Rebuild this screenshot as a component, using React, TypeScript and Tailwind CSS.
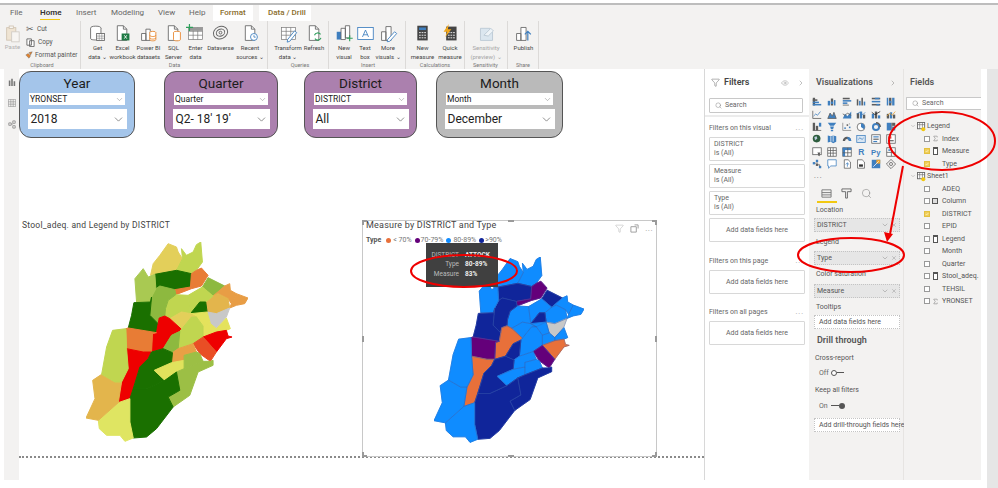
import React from "react"
import { ChevronDown, ChevronRight, Eye, Filter, Search, Sigma, X } from "lucide-react"

const BLUE = "#3f7fbf"
const GREY = "#5c5c5c"
const YEL = "#f2c811"

// district outlines, same shapes on both maps, [points, left colour, right colour]
const LB = "#0f8cff"
const NV = "#10259a"
const PU = "#64007a"
const OR = "#e8703a"
const DG = "#1a7000"
const districts: [string, string, string][] = [
  ["452,200 460,165 480,140 505,105 530,115 535,130 548,150 530,185 465,197", "#e3cf5a", LB],
  ["530,185 548,150 545,120 560,140 580,130 590,108 603,100 608,160 590,185 575,195", "#c0d650", LB],
  ["465,197 530,185 575,195 572,235 525,243 480,232 468,240", DG, NV],
  ["575,195 590,185 605,178 625,200 605,232 575,240 528,258 525,243 572,235", "#e87c35", PU],
  ["625,207 675,232 640,262 608,235", "#8db93f", NV],
  ["655,255 640,262 675,232 690,225 692,245 710,255 695,285 685,270", "#e89d45", LB],
  ["710,255 745,268 735,285 710,290 690,298 695,285", "#e89d45", LB],
  ["618,280 640,262 655,255 685,270 690,298 650,315 622,310", "#e3b54c", LB],
  ["565,260 608,235 640,262 618,280 600,280 572,315", "#c0d650", LB],
  ["572,315 600,280 618,280 622,310 590,325", DG, NV],
  ["497,300 505,275 528,258 565,260 572,315 545,310 510,330 495,322", "#c0d650", LB],
  ["455,265 468,240 480,232 525,243 528,258 505,275 497,300 495,322 478,328 475,345 450,320", "#8db93f", NV],
  ["405,210 430,180 445,205 465,197 468,240 455,265 452,280 410,280", "#a9c952", LB],
  ["402,282 452,280 455,265 450,320 475,345 470,372 385,358 395,320", DG, NV],
  ["622,310 650,315 690,298 680,325 650,360 632,345", "#c8c8c8", "#c8c8c8"],
  ["590,325 572,315 622,310 632,345 610,352", "#e4e25c", LB],
  ["650,360 680,328 692,360 680,365 650,370", "#e4e25c", LB],
  ["610,352 632,345 650,360 650,370 610,385", "#e4e25c", LB],
  ["510,330 545,310 572,315 590,325 575,325 545,362", "#e3cf5a", LB],
  ["458,375 470,372 475,345 478,328 495,322 510,330 545,362 540,368 515,380 490,420 455,430", "#ee0000", OR],
  ["378,360 385,358 470,372 458,375 455,430 430,430 380,420", "#e87c35", PU],
  ["380,420 430,430 455,430 445,450 420,475 400,540 390,570 355,582 365,520 385,480", "#ee0000", OR],
  ["535,420 540,368 545,362 575,325 590,325 610,352 610,385 580,405", "#c0d650", LB],
  ["610,385 650,370 680,365 685,382 697,385 680,390 650,430", "#ee0000", OR],
  ["580,405 610,385 650,430 632,458 600,435", "#e94e25", PU],
  ["490,420 515,380 540,368 535,420 518,432", "#8db93f", NV],
  ["515,462 518,432 535,420 580,405 590,430 553,440 553,455", "#e8a045", LB],
  ["445,450 455,430 490,420 518,432 515,462 463,485 495,515 440,540 400,540 420,475", DG, NV],
  ["463,485 515,462 553,455 553,480 530,490 495,515", "#e0e25c", LB],
  ["553,440 590,430 600,435 610,458 553,480 553,455", "#9cbf45", LB],
  ["505,565 540,545 530,490 553,480 610,458 632,458 640,455 640,470 595,490 570,560 520,595", "#9cbf45", NV],
  ["390,570 400,540 440,540 495,515 530,490 540,545 505,565 520,595 470,660 440,685 400,688 390,640", DG, NV],
  ["295,635 355,582 390,570 390,640 400,688 375,698 360,680 320,680 298,660", "#dfe562", LB],
  ["258,628 285,570 278,515 305,497 345,520 365,520 355,582 295,635", "#e3b54c", LB],
  ["305,497 320,415 338,365 378,360 380,420 385,480 365,520 345,520", "#c0d650", LB],
]

const PunjabMap = ({ right, className }: { right?: boolean; className: string }) => (
  <svg viewBox="258 100 487 600" preserveAspectRatio="none" className={className}>
    {districts.map((d) => (
      <polygon key={d[0]} points={d[0]} fill={right ? d[2] : d[1]} stroke={right ? d[2] : d[1]} strokeWidth={3} strokeLinejoin="round" />
    ))}
    {right &&
      districts.map((d) => <polygon key={d[0]} points={d[0]} fill="none" stroke="#3b5fae" strokeWidth={1} strokeLinejoin="round" />)}
  </svg>
)

const Doc = ({ children }: { children?: React.ReactNode }) => (
  <>
    <path d="M5 2h7l4 4v13H5z" fill="#fff" stroke="#666" />
    <path d="M12 2v4h4" fill="none" stroke="#666" />
    {children}
  </>
)

const Table = ({ x = 0 }: { x?: number }) => (
  <g transform={`translate(${x} 0)`} fill="none" stroke="#777" strokeWidth=".8">
    <rect x="3" y="4" width="16" height="14" fill="#fff" />
    <path d="M3 8.5h16M3 13h16M8.3 4v14M13.6 4v14" />
  </g>
)

const ribbonIcons: Record<string, React.ReactNode> = {
  get: (
    <>
      <ellipse cx="9" cy="5" rx="6" ry="2.5" fill="#fff" stroke="#666" />
      <path d="M3 5v12c0 2 12 2 12 0V5" fill="#fff" stroke="#666" />
      <rect x="10" y="11" width="9" height="8" fill="#fff" stroke="#666" />
      <path d="M10 14h9M10 16.5h9M13 11v8M16 11v8" stroke="#777" strokeWidth=".6" />
    </>
  ),
  excel: (
    <Doc>
      <rect x="10" y="11" width="9" height="8" fill="#1e7a45" />
      <path d="M13 13l3 4M16 13l-3 4" stroke="#fff" />
    </Doc>
  ),
  pbi: (
    <>
      <path d="M3 11h5v8H3zM8 6h5v13H8z" fill="#fff" stroke="#666" />
      <ellipse cx="16" cy="10" rx="3.5" ry="1.5" fill="#fff" stroke="#e8862e" />
      <path d="M12.5 10v8c0 2 7 2 7 0v-8M12.5 13c0 2 7 2 7 0M12.5 16c0 2 7 2 7 0" fill="#fff" stroke="#e8862e" />
    </>
  ),
  sql: (
    <Doc>
      <ellipse cx="15" cy="10" rx="4" ry="1.6" fill="#fff" stroke="#e8862e" />
      <path d="M11 10v8c0 2 8 2 8 0v-8" fill="#fff" stroke="#e8862e" />
    </Doc>
  ),
  enter: (
    <>
      <Table />
      <rect x="3" y="4" width="16" height="4" fill="#999" />
      <path d="M4 0v8M0 4h8" stroke="#2e9e5b" strokeWidth="1.4" />
    </>
  ),
  dataverse: (
    <g fill="none" stroke="#666" strokeWidth="1.1">
      <ellipse cx="11" cy="10" rx="8.5" ry="7" transform="rotate(-25 11 10)" />
      <ellipse cx="11" cy="10" rx="5" ry="4" transform="rotate(-25 11 10)" />
      <circle cx="11" cy="10" r="1.6" />
    </g>
  ),
  recent: (
    <Doc>
      <circle cx="15" cy="15" r="4" fill="#fff" stroke={BLUE} />
      <path d="M15 13v2.2h2" fill="none" stroke={BLUE} />
    </Doc>
  ),
  transform: (
    <>
      <Table />
      <path d="M10 18l8-10 2.5 2-8 10-3 1z" fill="#fff" stroke={BLUE} />
    </>
  ),
  refresh: (
    <Doc>
      <path d="M11 13a4 4 0 0 1 7-1M18.5 16a4 4 0 0 1-7 1" fill="none" stroke="#2e9e5b" strokeWidth="1.3" />
    </Doc>
  ),
  visual: (
    <>
      <rect x="2" y="9" width="5" height="9" fill={BLUE} />
      <path d="M7 5h5v13H7zM12 2h5v14h-5z" fill="#fff" stroke="#666" />
      <path d="M17 13v7M13.5 16.500h7" stroke="#2e9e5b" strokeWidth="1.3" />
    </>
  ),
  text: (
    <>
      <rect x="2" y="4" width="18" height="14" fill="#fff" stroke={BLUE} />
      <path d="M7.500 15l3.500-8 3.500 8M8.800 12.500h4.400" fill="none" stroke={BLUE} />
    </>
  ),
  more: (
    <>
      <path d="M3 9h5v10H3zM8 3h6v16H8z" fill="#fff" stroke="#666" />
      <path d="M10 18l8-9 2.500 2-8 9-3 .5z" fill="#fff" stroke={BLUE} />
    </>
  ),
  measure: (
    <>
      <rect x="5" y="2" width="12" height="17" fill="#444" />
      <rect x="7" y="4" width="8" height="3" fill={BLUE} />
      <path d="M7 10h2M10 10h2M13 10h2M7 13h2M10 13h2M13 13h2M7 16h2M10 16h2M13 16h2" stroke="#fff" />
    </>
  ),
  quick: (
    <>
      <rect x="6" y="3" width="12" height="16" fill="#444" />
      <path d="M8 10h2M11 10h2M14 10h2M8 13h2M11 13h2M14 13h2M8 16h2M11 16h2M14 16h2" stroke="#fff" />
      <path d="M9 0L3 9h4l-2 6 7-9H8z" fill="#f2a71b" />
    </>
  ),
  sensitivity: (
    <>
      <path d="M4 5h11l3 3v11H4z" fill="#dbe6ef" stroke="#b9c7d3" />
      <path d="M8 13l8-8 3 3-6 6z" fill="#eef3f7" stroke="#b9c7d3" />
    </>
  ),
  publish: (
    <>
      <path d="M3 11h5v8H3zM8 4h6v15H8z" fill="#fff" stroke="#666" />
      <path d="M16 19V9M12.500 12l3.500-3.500 3.500 3.500" fill="none" stroke={BLUE} strokeWidth="1.4" />
    </>
  ),
}

type RibbonBtn = { icon: string; lines: string[]; w: string; faded?: boolean }

const ribbonGroups: { label: string; cls: string; buttons: RibbonBtn[] }[] = [
  {
    label: "Data",
    cls: "w-[187px] pl-[4px]",
    buttons: [
      { icon: "get", lines: ["Get", "data ⌄"], w: "w-[25px]" },
      { icon: "excel", lines: ["Excel", "workbook"], w: "w-[25px]" },
      { icon: "pbi", lines: ["Power BI", "datasets"], w: "w-[27px]" },
      { icon: "sql", lines: ["SQL", "Server"], w: "w-[23px]" },
      { icon: "enter", lines: ["Enter", "data"], w: "w-[21px]" },
      { icon: "dataverse", lines: ["Dataverse"], w: "w-[29px]" },
      { icon: "recent", lines: ["Recent", "sources ⌄"], w: "w-[30px]" },
    ],
  },
  {
    label: "Queries",
    cls: "w-[61px] pl-[7px]",
    buttons: [
      { icon: "transform", lines: ["Transform", "data ⌄"], w: "w-[26px]" },
      { icon: "refresh", lines: ["Refresh"], w: "w-[26px]" },
    ],
  },
  {
    label: "Insert",
    cls: "w-[77px] pl-[5px]",
    buttons: [
      { icon: "visual", lines: ["New", "visual"], w: "w-[20px]" },
      { icon: "text", lines: ["Text", "box"], w: "w-[22px]" },
      { icon: "more", lines: ["More", "visuals ⌄"], w: "w-[24px]" },
    ],
  },
  {
    label: "Calculations",
    cls: "w-[59px] pl-[3px]",
    buttons: [
      { icon: "measure", lines: ["New", "measure"], w: "w-[27px]" },
      { icon: "quick", lines: ["Quick", "measure"], w: "w-[28px]" },
    ],
  },
  {
    label: "Sensitivity",
    cls: "w-[43px] pl-[2px]",
    buttons: [{ icon: "sensitivity", lines: ["Sensitivity", "(preview) ⌄"], w: "w-[38px]", faded: true }],
  },
  {
    label: "Share",
    cls: "w-[31px] pl-[3px]",
    buttons: [{ icon: "publish", lines: ["Publish"], w: "w-[25px]" }],
  },
]

const RibbonGroup = ({ label, cls, buttons }: { label: string; cls: string; buttons: RibbonBtn[] }) => (
  <div className={`${cls} h-full flex flex-col border-r border-[#dcdad8]`}>
    <div className="flex flex-1">
      {buttons.map((b) => (
        <div key={b.icon} className={`${b.w} flex flex-col items-center pt-[3px] shrink-0 ${b.faded ? "text-[#a6a6a6]" : "text-[#444]"}`}>
          <svg viewBox="0 0 22 22" className="w-[19px] h-[19px] mb-[1px] shrink-0">
            {ribbonIcons[b.icon]}
          </svg>
          {b.lines.map((l) => (
            <span key={l} className="text-[6px] leading-[8.500px] whitespace-nowrap">
              {l}
            </span>
          ))}
        </div>
      ))}
    </div>
    <div className="text-[5.500px] leading-[8px] text-center text-[#777] -ml-[3px]">{label}</div>
  </div>
)

const Slicer = ({ title, field, value, cls }: { title: string; field: string; value: string; cls: string }) => (
  <div className={`${cls} h-[67px] rounded-[12px] border border-[#555] flex flex-col items-center px-[9px] pt-[3px] shrink-0`}>
    <div className="text-[13.500px] leading-[16px] text-[#1c1c1c]">{title}</div>
    <div className="w-full h-[12px] mt-[2px] bg-white flex items-center justify-between px-[1px] text-[8.500px] text-[#222]">
      <span>{field}</span>
      <ChevronDown className="w-[9px] h-[9px] text-[#777]" strokeWidth={1.2} />
    </div>
    <div className="w-[calc(100%+3px)] h-[20px] mt-[4px] bg-white flex items-center justify-between pl-[3px] pr-[2px] text-[12px] text-[#222]">
      <span>{value}</span>
      <ChevronDown className="w-[13px] h-[13px] text-[#555]" strokeWidth={1.2} />
    </div>
  </div>
)

const R = (x: number, y: number, w: number, h: number, c: string = BLUE) => <rect key={`${x}${y}${w}${h}`} x={x} y={y} width={w} height={h} fill={c} />

const lineIcon = (d: string, c: string = GREY) => <path d={d} fill="none" stroke={c} strokeWidth="1" />

const vizIcons: React.ReactNode[] = [
  <>{R(1, 1, 3, 10, GREY)}{R(1, 6, 8, 2)}{R(1, 9, 11, 2)}{R(1, 3, 6, 2, GREY)}</>,
  <>{R(1, 5, 3, 6)}{R(5, 2, 3, 9, GREY)}{R(9, 4, 2, 7)}{R(5, 6, 3, 3)}</>,
  <>{R(1, 1, 9, 2, GREY)}{R(1, 4, 11, 2)}{R(1, 7, 6, 2)}{R(1, 10, 8, 1, GREY)}</>,
  <>{R(1, 3, 2, 8, GREY)}{R(4, 5, 2, 6)}{R(7, 1, 2, 10, GREY)}{R(10, 6, 2, 5)}</>,
  <>{R(1, 1, 11, 2, GREY)}{R(5, 1, 6, 2)}{R(1, 5, 11, 2)}{R(1, 9, 11, 2, GREY)}{R(7, 9, 4, 2)}</>,
  <>{R(1, 1, 2, 10)}{R(4, 1, 3, 10, GREY)}{R(8, 1, 3, 10)}{R(4, 5, 3, 3)}</>,
  <>{lineIcon("M1 1v10h11")}{lineIcon("M2 8l3-3 2 2 4-5", BLUE)}</>,
  <><path d="M1 11l3-7 3 4 2-5 3 8z" fill={BLUE} />{lineIcon("M1 11l3-7 3 4 2-5 3 8z")}</>,
  <><path d="M1 11l3-6 3 3 5-6v9z" fill={BLUE} />{lineIcon("M1 5l3 2 3-3 5 3")}</>,
  <>{R(1, 4, 3, 7, GREY)}{R(5, 2, 3, 9)}{R(9, 6, 3, 5, GREY)}{lineIcon("M1 5l4-2 4 3 3-3", BLUE)}</>,
  <>{R(1, 5, 3, 6)}{R(5, 2, 3, 9, GREY)}{R(9, 7, 3, 4)}{lineIcon("M1 3l4 3 7-4", "#222")}</>,
  <>{R(1, 5, 3, 6, GREY)}{R(5, 3, 3, 8)}{R(9, 6, 3, 5, GREY)}{lineIcon("M1 8l4-4 3 3 4-5", "#e8a02e")}</>,
  <>{R(1, 1, 3, 10, GREY)}{R(5, 5, 3, 6, GREY)}{R(9, 1, 3, 5)}{lineIcon("M1 11h11")}</>,
  <><path d="M1 1h11l-3 4H4zM4 6h5l-1 3H5zM5 10h3v2H5z" fill={BLUE} /></>,
  <>{lineIcon("M1 1v10h11", "#888")}{R(3, 7, 2, 2)}{R(6, 3, 2, 2, GREY)}{R(9, 6, 2, 2)}{R(9, 2, 1, 1, GREY)}</>,
  <><circle cx="6.500" cy="6.500" r="5" fill="#fff" stroke={GREY} /><path d="M6.500 6.500V1.500a5 5 0 0 1 4 8z" fill={BLUE} /></>,
  <><circle cx="6.500" cy="6.500" r="4" fill="none" stroke={BLUE} strokeWidth="2.500" /><path d="M6.500 1a5.500 5.500 0 0 1 5.500 5.500" fill="none" stroke={GREY} strokeWidth="2" /></>,
  <>{R(1, 1, 6, 10)}{R(8, 1, 4, 4, GREY)}{R(8, 6, 4, 5, BLUE)}{lineIcon("M7.500 1v10")}</>,
  <><circle cx="6" cy="6" r="5" fill="#2e5d3e" /><path d="M3 4l3-1 1 3-3 2z" fill="#bcd" /></>,
  <><path d="M1 2l4 1 3-1 4 1v7l-4 2-3-2-4 1z" fill={BLUE} />{lineIcon("M5 3v7M8 2v8", "#fff")}</>,
  <><path d="M1 9a5.500 5.500 0 0 1 11 0h-3a2.500 2.500 0 0 0-5 0z" fill={GREY} /><path d="M7 4a5 5 0 0 1 5 5H9a2.500 2.500 0 0 0-2-2.500z" fill={BLUE} /></>,
  <><rect x="1" y="2" width="11" height="9" fill="#d8e6f3" stroke={BLUE} />{lineIcon("M3 7l2-2 3 2 2-2", BLUE)}</>,
  <><rect x="1" y="1" width="11" height="11" fill="#fff" stroke={GREY} />{R(3, 3, 7, 1.500)}{R(3, 6, 7, 1.500, GREY)}{R(3, 9, 5, 1.500)}</>,
  <><rect x="1" y="1" width="11" height="11" fill="#fff" stroke={GREY} />{R(3, 3, 4, 3, "#d9534f")}{R(3, 8, 7, 1.500, GREY)}</>,
  <><rect x="1" y="1" width="11" height="9" fill="#fff" stroke={GREY} /><path d="M7 7l4 0-1 2v3l-2-1V9z" fill={GREY} /></>,
  <><rect x="1" y="1" width="11" height="11" fill="#fff" stroke={GREY} />{lineIcon("M1 4.500h11M1 8h11M4.500 1v11M8 1v11", GREY)}</>,
  <><rect x="1" y="1" width="11" height="11" fill="#fff" stroke={GREY} />{R(1, 1, 11, 3)}{R(1, 1, 3, 11)}{lineIcon("M1 7.500h11M7.500 1v11", GREY)}</>,
  <text x="3" y="10.500" fontSize="11" fontWeight="700" fill={BLUE} fontFamily="Liberation Sans, sans-serif">R</text>,
  <text x="0" y="10" fontSize="10" fontWeight="700" fill={BLUE} fontFamily="Liberation Sans, sans-serif">Py</text>,
  <><rect x="1" y="1" width="11" height="11" fill="#fff" stroke={GREY} />{R(3, 3, 3, 2)}{lineIcon("M1 7h11M7 1v11", GREY)}</>,
  <>{R(1, 4, 3, 3)}{R(5, 1, 3, 3)}{R(5, 6, 3, 3, GREY)}{R(9, 9, 3, 3)}{lineIcon("M4 5.500h1M6.500 4v2M8 7.500h2v2", GREY)}</>,
  <><path d="M1 1h11v8H5l-3 3V9H1z" fill="#fff" stroke={BLUE} /></>,
  <><path d="M3 1h5l3 3v8H3z" fill="#fff" stroke={GREY} />{lineIcon("M5 7l2-2 2 2M7 5v5", BLUE)}</>,
  <><path d="M2 1h6l3 3v8H2z" fill="#fff" stroke={GREY} />{R(4, 7, 5, 3, "#333")}</>,
  <>{R(1, 1, 11, 11)}{R(7, 1, 5, 5, "#e8a02e")}{lineIcon("M3 10l7-7", "#fff")}</>,
  <g fill="none" stroke={GREY}><path d="M6.500 .5l6 6-6 6-6-6z" /><circle cx="6.500" cy="6.500" r="2" /></g>,
]

const Label = ({ children, cls = "" }: { children: React.ReactNode; cls?: string }) => <div className={`text-[7px] leading-[9px] text-[#555] ${cls}`}>{children}</div>

const Well = ({ label, cls, filled }: { label: string; cls: string; filled?: boolean }) => (
  <div className={`${cls} h-[14px] border border-dotted border-[#c4c4c4] ml-[5px] w-[86px] flex items-center justify-between px-[2px] text-[7px] ${filled ? "bg-[#e6e6e6]" : "bg-white pl-[4px]"} text-[#555]`}>
    <span className="whitespace-nowrap">{label}</span>
    {filled && (
      <span className="flex items-center gap-[2px] text-[#777]">
        <ChevronDown className="w-[8px] h-[8px]" strokeWidth={1.2} />
        <X className="w-[6px] h-[6px]" strokeWidth={1.4} />
      </span>
    )}
  </div>
)

const FilterCard = ({ title, cls, h = "h-[24px]" }: { title?: string; cls: string; h?: string }) => (
  <div className={`${cls} ${h} border border-[#d8d8d8] rounded-[1px] bg-white text-[7px] leading-[9px] text-[#666] ${title ? "pl-[4px] pt-[2px]" : "flex items-center justify-center"}`}>
    {title ? (
      <>
        <div>{title}</div>
        <div>is (All)</div>
      </>
    ) : (
      "Add data fields here"
    )}
  </div>
)

const FilterSection = ({ title, cls }: { title: string; cls: string }) => (
  <div className={`${cls} flex items-center justify-between pr-[5px] text-[7px] leading-[9px] text-[#666]`}>
    <span>{title}</span>
    <span className="text-[#999] tracking-[1px]">...</span>
  </div>
)

const TableIcon = () => (
  <svg viewBox="0 0 10 10" className="w-[9px] h-[9px] shrink-0 overflow-visible">
    <rect x=".5" y=".5" width="8" height="7" fill="#fff" stroke="#666" />
    <path d="M.5 3h8M3 .5v7M6 .5v7" stroke="#666" strokeWidth=".7" />
    <circle cx="7" cy="8" r="2.200" fill={YEL} />
  </svg>
)

const fields: { name: string; icon?: "sigma" | "calc" | "col"; checked?: boolean }[] = [
  { name: "ADEQ" },
  { name: "Column", icon: "col" },
  { name: "DISTRICT", checked: true },
  { name: "EPID" },
  { name: "Legend", icon: "calc" },
  { name: "Month" },
  { name: "Quarter" },
  { name: "Stool_adeq.", icon: "calc" },
  { name: "TEHSIL" },
  { name: "YRONSET", icon: "sigma" },
]

const FieldRow = ({ name, icon, checked }: { name: string; icon?: "sigma" | "calc" | "col"; checked?: boolean }) => (
  <div className="h-[12.500px] flex items-center pl-[20px] text-[7px] text-[#555]">
    <span className={`w-[6px] h-[6px] border shrink-0 flex items-center justify-center ${checked ? "bg-[#f0ce5a] border-[#e3c040]" : "bg-white border-[#999]"}`}>
      {checked && (
        <svg viewBox="0 0 6 6" className="w-[4px] h-[4px]">
          <path d="M1 3l1.500 1.500L5 1.500" fill="none" stroke="#fff6cf" />
        </svg>
      )}
    </span>
    <span className="w-[10px] flex justify-center shrink-0">
      {icon === "sigma" && <Sigma className="w-[7px] h-[7px]" strokeWidth={1.4} />}
      {icon === "calc" && <span className="w-[5px] h-[8px] border border-[#555] border-t-2 bg-white" />}
      {icon === "col" && <span className="w-[6px] h-[6px] border border-[#555] bg-[#ddd]" />}
    </span>
    <span className="ml-[2px] whitespace-nowrap">{name}</span>
  </div>
)

const TableRow = ({ name }: { name: string }) => (
  <div className="h-[12.500px] flex items-center pl-[6px] text-[7px] text-[#555]">
    <ChevronDown className="w-[6px] h-[6px] mr-[1px] text-[#777]" strokeWidth={1.3} />
    <TableIcon />
    <span className="ml-[1px]">{name}</span>
  </div>
)

const handleCls = "absolute bg-[#9a9a9a]"

export default function App() {
  return (
    <div className="relative w-[998px] h-[488px] overflow-hidden bg-white font-['Roboto',sans-serif]">
      <div className="h-[3px]" />
      <div className="h-[2px] bg-[#bdbdbd]" />
      {/* tabs */}
      <div className="h-[16px] bg-[#f3f2f1] flex items-stretch text-[8px] text-[#666] leading-[16px]">
        <span className="ml-[10px] w-[30px]">File</span>
        <span className="w-[36px] font-semibold text-[#333] relative">
          Home
          <span className="absolute left-0 top-[14px] w-[20px] h-[1px] bg-[#f2c811]" />
        </span>
        <span className="w-[35px]">Insert</span>
        <span className="w-[47px]">Modeling</span>
        <span className="w-[31px]">View</span>
        <span className="w-[24px]">Help</span>
        <span className="w-[40px] bg-white pl-[7px] font-medium text-[#8a6d2b]">Format</span>
        <span className="w-[6px]" />
        <span className="w-[52px] bg-white pl-[9px] font-medium text-[#8a6d2b]">Data / Drill</span>
      </div>
      {/* ribbon */}
      <div className="h-[48px] bg-[#f3f2f1] flex">
        <div className="w-[81px] h-full flex flex-col border-r border-[#dcdad8] pl-[4px] shrink-0">
          <div className="flex flex-1 pt-[3px]">
            <div className="w-[17px] flex flex-col items-center text-[#b0b0b0] text-[6px] leading-[8px]">
              <svg viewBox="0 0 18 22" className="w-[15px] h-[19px]">
                <rect x="2" y="4" width="11" height="15" fill="#efe4d3" stroke="#cfc2b0" />
                <rect x="8" y="9" width="9" height="12" fill="#f7f5f2" stroke="#cfcac4" />
                <rect x="5" y="2" width="5" height="3" fill="#f7f5f2" stroke="#cfc2b0" />
              </svg>
              Paste
            </div>
            <div className="flex flex-col gap-[3px] pl-[4px] text-[6.500px] leading-[10px] text-[#555] whitespace-nowrap">
              <div className="flex items-center gap-[3px] pl-[1px]">
                <span className="text-[9px] leading-[10px]">✂</span>Cut
              </div>
              <div className="flex items-center gap-[3px] pl-[1px]">
                <svg viewBox="0 0 10 10" className="w-[9px] h-[9px]">
                  <path d="M1 1h5v7H1zM4 3h5v6.500H4z" fill="#fff" stroke="#666" />
                </svg>
                Copy
              </div>
              <div className="flex items-center gap-[2px]">
                <svg viewBox="0 0 10 10" className="w-[8px] h-[8px]">
                  <path d="M1 5l3-2 3 3-2 3zM5 2l4-1-2 4z" fill="#e0832f" stroke="#666" strokeWidth=".5" />
                </svg>
                Format painter
              </div>
            </div>
          </div>
          <div className="text-[5.500px] leading-[8px] text-center text-[#777]">Clipboard</div>
        </div>
        {ribbonGroups.map((g) => (
          <RibbonGroup key={g.label} {...g} />
        ))}
      </div>
      {/* body */}
      <div className="h-[411px] flex">
        <div className="w-[19px] pl-[4px] shrink-0">
          <div className="h-full bg-[#f3f2f1] flex flex-col items-center gap-[13px] pt-[9px]">
            <svg viewBox="0 0 10 10" className="w-[8px] h-[8px]">
              <path d="M1 3h2v7H1zM4 1h2v9H4zM7 4h2v6H7z" fill="#777" />
            </svg>
            <svg viewBox="0 0 10 10" className="w-[8px] h-[8px]">
              <path d="M.5.5h9v9h-9zM.5 3.500h9M.5 6.500h9M3.500.5v9M6.500.5v9" fill="none" stroke="#888" strokeWidth=".7" />
            </svg>
            <svg viewBox="0 0 10 10" className="w-[8px] h-[9px]">
              <path d="M1 3h3v3H1zM6 .5h3v3H6zM6 6.500h3v3H6zM4 4.500h2" fill="none" stroke="#888" />
            </svg>
          </div>
        </div>
        {/* report canvas */}
        <div className="w-[685px] shrink-0 flex flex-col">
          <div className="h-[389px] border-b-2 border-dotted border-[#8a8a8a] pt-[2px] flex flex-col">
            <div className="flex items-start">
              <Slicer title="Year" field="YRONSET" value="2018" cls="w-[116px] bg-[#a4c5ea]" />
              <div className="w-[29px] shrink-0" />
              <Slicer title="Quarter" field="Quarter" value="Q2- 18' 19'" cls="w-[114px] bg-[#ab80ae]" />
              <div className="w-[26px] shrink-0" />
              <Slicer title="District" field="DISTRICT" value="All" cls="w-[113px] bg-[#ab80ae]" />
              <div className="w-[19px] shrink-0" />
              <Slicer title="Month" field="Month" value="December" cls="w-[127px] bg-[#bababa]" />
            </div>
            <div className="flex mt-[82px]">
              <div className="w-[343px] shrink-0">
                <div className="pl-[3px] text-[8.500px] leading-[11px] tracking-[.25px] text-[#444]">Stool_adeq. and Legend by DISTRICT</div>
                <PunjabMap className="w-[162px] h-[200px] ml-[67px] mt-[11px]" />
              </div>
              <div className="relative w-[295px] h-[237px] border border-[#c8c8c8] shrink-0">
                <div className="pl-[3px] text-[9px] leading-[12px] mt-[-2px] tracking-[.2px] text-[#444]">Measure by DISTRICT and Type</div>
                <div className="flex items-center pl-[3px] mt-[5px] h-[9px] text-[7px] text-[#777] whitespace-nowrap">
                  <span className="font-bold text-[#555] mr-[5px]">Type</span>
                  <span className="w-[5px] h-[5px] rounded-full bg-[#e8703a] mr-[2px]" />
                  <span className="mr-[3px]">&lt; 70%</span>
                  <span className="w-[5px] h-[5px] rounded-full bg-[#64007a] mr-[1px]" />
                  <span className="mr-[3px]">70-79%</span>
                  <span className="w-[5px] h-[5px] rounded-full bg-[#0f8cff] mr-[2px]" />
                  <span className="mr-[3px]">80-89%</span>
                  <span className="w-[5px] h-[5px] rounded-full bg-[#10259a] mr-[1px]" />
                  <span>&gt;90%</span>
                </div>
                <PunjabMap right className="w-[150px] h-[186px] ml-[71px] mt-[12px]" />
                {/* tooltip */}
                <div className="absolute left-[63px] top-[22px] w-[72px] h-[44px] bg-[#404040] grid grid-cols-[33px_1fr] gap-x-[6px] content-center text-[6.500px] leading-[9.500px]">
                  <span className="text-right text-[#bbb]">DISTRICT</span>
                  <span className="font-bold text-[#eee]">ATTOCK</span>
                  <span className="text-right text-[#bbb]">Type</span>
                  <span className="font-bold text-[#eee]">80-89%</span>
                  <span className="text-right text-[#bbb]">Measure</span>
                  <span className="font-bold text-[#eee]">83%</span>
                </div>
                {/* header icons */}
                <div className="absolute right-[3px] top-[3px] flex items-center gap-[6px] text-[#999]">
                  <Filter className="w-[9px] h-[9px]" strokeWidth={1} />
                  <svg viewBox="0 0 10 10" className="w-[9px] h-[9px]">
                    <path d="M1 3h6v6H1zM5 1h4v4" fill="none" stroke="#999" />
                  </svg>
                  <span className="text-[8px] leading-[8px] tracking-[.5px]">...</span>
                </div>
                {/* resize handles */}
                <span className={`${handleCls} -left-[1px] -top-[1px] w-[5px] h-[2px]`} />
                <span className={`${handleCls} -left-[1px] -top-[1px] w-[2px] h-[5px]`} />
                <span className={`${handleCls} -right-[1px] -top-[1px] w-[5px] h-[2px]`} />
                <span className={`${handleCls} -right-[1px] -top-[1px] w-[2px] h-[5px]`} />
                <span className={`${handleCls} -left-[1px] -bottom-[1px] w-[5px] h-[2px]`} />
                <span className={`${handleCls} -left-[1px] -bottom-[1px] w-[2px] h-[5px]`} />
                <span className={`${handleCls} -right-[1px] -bottom-[1px] w-[5px] h-[2px]`} />
                <span className={`${handleCls} -right-[1px] -bottom-[1px] w-[2px] h-[5px]`} />
                <span className={`${handleCls} left-[145px] -top-[1px] w-[6px] h-[2px]`} />
                <span className={`${handleCls} left-[145px] -bottom-[1px] w-[6px] h-[2px]`} />
                <span className={`${handleCls} -left-[1px] top-[115px] w-[2px] h-[6px]`} />
                <span className={`${handleCls} -right-[1px] top-[115px] w-[2px] h-[6px]`} />
              </div>
            </div>
          </div>
        </div>
        {/* filters */}
        <div className="w-[105px] shrink-0 border-l border-[#d8d8d8] bg-white pl-[4px] flex flex-col">
          <div className="flex items-center h-[26px] pr-[4px] pt-[1px]">
            <Filter className="w-[9px] h-[9px] text-[#555] ml-[2px]" strokeWidth={1.2} />
            <span className="ml-[4px] text-[9px] font-semibold text-[#444]">Filters</span>
            <Eye className="w-[8px] h-[8px] text-[#888] ml-auto" strokeWidth={1.2} />
            <ChevronRight className="w-[8px] h-[8px] text-[#666] ml-[8px]" strokeWidth={1.2} />
          </div>
          <div className="w-[94px] h-[15px] mt-[3px] border border-[#c8c8c8] rounded-[1px] flex items-center pl-[5px] gap-[3px] text-[7px] text-[#666]">
            <Search className="w-[7px] h-[7px]" strokeWidth={1.3} />
            Search
          </div>
          <div className="-ml-[4px] h-[2px] mt-[2px] bg-[#ececec]" />
          <FilterSection title="Filters on this visual" cls="mt-[7px]" />
          <FilterCard title="DISTRICT" cls="w-[96px] mt-[4px]" />
          <FilterCard title="Measure" cls="w-[96px] mt-[3px]" />
          <FilterCard title="Type" cls="w-[96px] mt-[3px]" />
          <FilterCard cls="w-[96px] mt-[3px]" />
          <FilterSection title="Filters on this page" cls="mt-[15px]" />
          <FilterCard cls="w-[96px] mt-[4px]" />
          <FilterSection title="Filters on all pages" cls="mt-[14px]" />
          <FilterCard cls="w-[96px] mt-[4px]" />
        </div>
        {/* visualizations */}
        <div className="w-[95px] shrink-0 bg-[#f3f2f1] border-r border-[#e6e4e2] flex flex-col">
          <div className="flex items-center justify-between h-[26px] pl-[7px] pr-[6px] pt-[2px] text-[9px] font-semibold text-[#555]">
            Visualizations
            <ChevronRight className="w-[8px] h-[8px] text-[#666]" strokeWidth={1.2} />
          </div>
          <div className="grid grid-cols-[repeat(6,14.700px)] auto-rows-[12.400px] pl-[1px] mt-[1px]">
            {vizIcons.map((ic, i) => (
              <div key={i} className="flex items-center justify-center">
                <svg viewBox="0 0 13 13" className="w-[10px] h-[10px]">
                  {ic}
                </svg>
              </div>
            ))}
          </div>
          <div className="pl-[5px] mt-[2px] text-[7px] leading-[8px] tracking-[1px] text-[#666]">...</div>
          <div className="flex items-center pl-[12px] gap-[9px] h-[16px] mt-[5px]">
            <svg viewBox="0 0 12 12" className="w-[11px] h-[11px]">
              <path d="M1 2h10v8H1zM1 5h10M1 7.500h10" fill="none" stroke="#777" />
            </svg>
            <svg viewBox="0 0 12 12" className="w-[11px] h-[11px]">
              <path d="M1 1h10v3H7v7H5V4H1z" fill="none" stroke="#666" />
            </svg>
            <Search className="w-[11px] h-[11px] text-[#777]" strokeWidth={1.1} />
          </div>
          <div className="ml-[8px] w-[20px] h-[1.500px] bg-[#f2c811]" />
          <Label cls="ml-[7px] mt-[3px]">Location</Label>
          <Well label="DISTRICT" cls="mt-[3px]" filled />
          <Label cls="ml-[7px] mt-[6px]">Legend</Label>
          <Well label="Type" cls="mt-[4px]" filled />
          <Label cls="ml-[7px] mt-[5px]">Color saturation</Label>
          <Well label="Measure" cls="mt-[5px]" filled />
          <Label cls="ml-[7px] mt-[5px]">Tooltips</Label>
          <Well label="Add data fields here" cls="mt-[3px]" />
          <div className="ml-[8px] mt-[6px] text-[9px] leading-[11px] font-semibold text-[#555]">Drill through</div>
          <Label cls="ml-[6px] mt-[8px]">Cross-report</Label>
          <div className="ml-[10px] mt-[5px] h-[10px] flex items-center text-[7px] text-[#666]">
            Off
            <span className="ml-[2px] w-[6px] h-[6px] rounded-full border border-[#555] bg-white" />
            <span className="w-[7px] h-[1px] bg-[#555]" />
          </div>
          <Label cls="ml-[6px] mt-[8px]">Keep all filters</Label>
          <div className="ml-[10px] mt-[6px] h-[10px] flex items-center text-[7px] text-[#666]">
            On
            <span className="ml-[3px] w-[8px] h-[1px] bg-[#555]" />
            <span className="w-[6px] h-[6px] rounded-full bg-[#555]" />
          </div>
          <Well label="Add drill-through fields here" cls="mt-[7px]" />
        </div>
        {/* fields */}
        <div className="w-[77px] shrink-0 bg-[#f3f2f1] flex flex-col">
          <div className="flex items-center h-[26px] pl-[6px] pt-[2px] text-[9px] font-semibold text-[#555]">Fields</div>
          <div className="ml-[2px] h-[13px] mt-[2px] bg-white border border-[#c8c8c8] border-r-0 rounded-l-[1px] flex items-center pl-[5px] gap-[3px] text-[7px] text-[#666]">
            <Search className="w-[7px] h-[7px]" strokeWidth={1.3} />
            Search
          </div>
          <div className="mt-[10px]" />
          <TableRow name="Legend" />
          <FieldRow name="Index" icon="sigma" />
          <FieldRow name="Measure" icon="calc" checked />
          <FieldRow name="Type" checked />
          <TableRow name="Sheet1" />
          {fields.map((f) => (
            <FieldRow key={f.name} {...f} />
          ))}
        </div>
        <div className="w-[6px] shrink-0" />
        <div className="flex-1 bg-[#e6e6e6] -mb-[8px]" />
      </div>
      {/* red annotations */}
      <svg viewBox="0 0 998 488" className="absolute inset-0 w-[998px] h-[488px] pointer-events-none">
        <g fill="none" stroke="#ee0000" strokeWidth="2">
          <ellipse cx="464" cy="271" rx="53" ry="16" />
          <ellipse cx="942" cy="141" rx="53" ry="29" />
          <ellipse cx="851" cy="255" rx="53" ry="17" />
          <path d="M903 166L890 234" />
        </g>
        <path d="M884 232l9 2-6 8z" fill="#ee0000" />
      </svg>
    </div>
  )
}
